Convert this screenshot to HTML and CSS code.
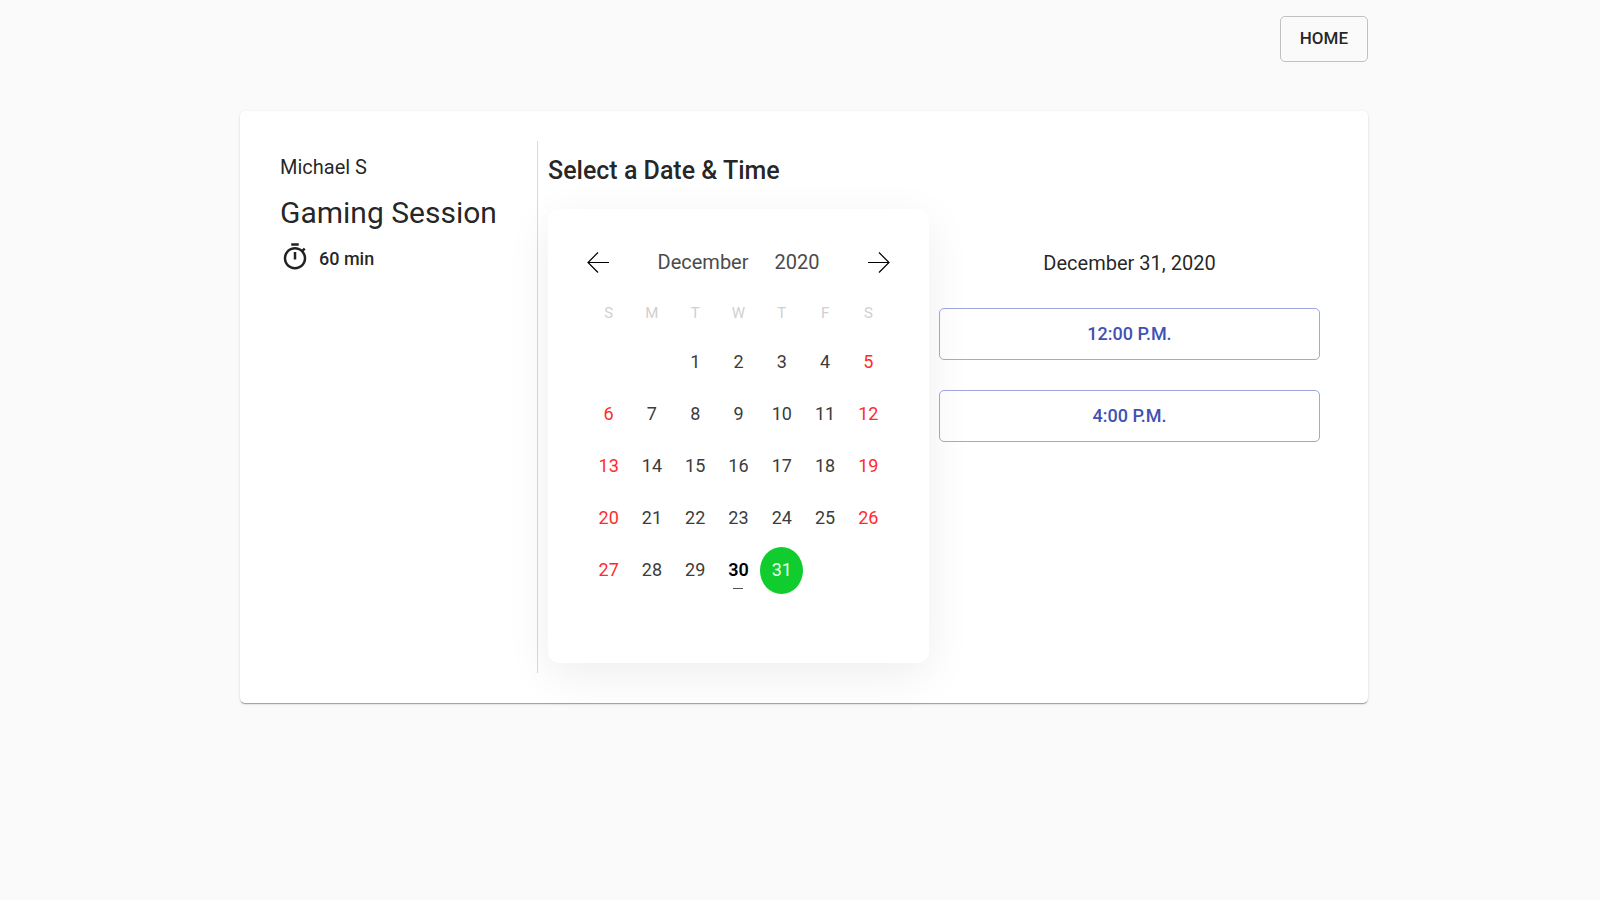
FILE: index.html
```html
<!DOCTYPE html>
<html lang="en">
<head>
<meta charset="utf-8">
<title>Gaming Session</title>
<link rel="stylesheet" href="styles.css">
</head>
<body>
<header class="topbar"><a class="home" href="#">HOME</a></header>
<main class="card">
  <section class="info">
    <p class="host">Michael S</p>
    <h1 class="event">Gaming Session</h1>
    <p class="duration">
      <svg class="timer" viewBox="0 0 24 24" aria-hidden="true"><path d="M15 1H9v2h6V1zm-4 13h2V8h-2v6zm8.030-6.610l1.420-1.420c-.43-.51-.9-.99-1.410-1.410l-1.420 1.420C16.070 4.740 14.120 4 12 4c-4.970 0-9 4.030-9 9s4.020 9 9 9 9-4.030 9-9c0-2.120-.74-4.070-1.970-5.610zM12 20c-3.870 0-7-3.130-7-7s3.130-7 7-7 7 3.130 7 7-3.130 7-7 7z"/></svg>
      <span class="minutes">60 min</span>
    </p>
  </section>
  <section class="picker">
    <h2 class="title">Select a Date &amp; Time</h2>
    <div class="columns">
      <div class="calendar">
        <div class="month-bar">
          <button class="arrow" type="button" aria-label="Previous month"><svg viewBox="0 0 22 22" aria-hidden="true"><path d="M22 11.500H1M11 1.500L1 11.500l10 10"/></svg></button>
          <div class="month-year"><button type="button">December</button><button type="button">2020</button></div>
          <button class="arrow" type="button" aria-label="Next month"><svg viewBox="0 0 22 22" aria-hidden="true"><path d="M0 11.500h21M11 1.500l10 10-10 10"/></svg></button>
        </div>
        <table class="days">
          <thead><tr><th>S</th><th>M</th><th>T</th><th>W</th><th>T</th><th>F</th><th>S</th></tr></thead>
          <tbody>
            <tr><td></td><td></td><td><button>1</button></td><td><button>2</button></td><td><button>3</button></td><td><button>4</button></td><td><button class="weekend">5</button></td></tr>
            <tr><td><button class="weekend">6</button></td><td><button>7</button></td><td><button>8</button></td><td><button>9</button></td><td><button>10</button></td><td><button>11</button></td><td><button class="weekend">12</button></td></tr>
            <tr><td><button class="weekend">13</button></td><td><button>14</button></td><td><button>15</button></td><td><button>16</button></td><td><button>17</button></td><td><button>18</button></td><td><button class="weekend">19</button></td></tr>
            <tr><td><button class="weekend">20</button></td><td><button>21</button></td><td><button>22</button></td><td><button>23</button></td><td><button>24</button></td><td><button>25</button></td><td><button class="weekend">26</button></td></tr>
            <tr><td><button class="weekend">27</button></td><td><button>28</button></td><td><button>29</button></td><td><button class="today">30</button></td><td><button class="selected" aria-pressed="true">31</button></td><td></td><td></td></tr>
          </tbody>
        </table>
      </div>
      <div class="slots">
        <h3 class="date">December 31, 2020</h3>
        <button class="slot" type="button">12:00 P.M.</button>
        <button class="slot" type="button">4:00 P.M.</button>
      </div>
    </div>
  </section>
</main>
</body>
</html>
```
FILE: styles.css
```css
* { box-sizing: border-box; }
body {
  margin: 0;
  padding: 16px 14.5% 40px 15%;
  background: #fafafa;
  color: rgba(0, 0, 0, 0.87);
  font: 400 20px/30px Roboto, sans-serif;
}
h1, h2, h3, p { margin: 0; font-weight: 400; }
button { font: inherit; color: inherit; background: none; border: 0; padding: 0; cursor: pointer; }

.topbar { display: flex; justify-content: flex-end; margin-bottom: 49px; }
.home {
  padding: 6px 19px 8px;
  border: 1px solid rgba(0, 0, 0, 0.23);
  border-radius: 5px;
  color: inherit;
  font-size: 17px;
  font-weight: 500;
  text-decoration: none;
}

.card {
  display: flex;
  padding: 30px 48px 30px 40px;
  background: #fff;
  border-radius: 5px;
  box-shadow: 0 2px 1px -1px rgba(0, 0, 0, 0.2), 0 1px 1px 0 rgba(0, 0, 0, 0.14), 0 1px 3px 0 rgba(0, 0, 0, 0.12);
}
.info { flex: none; width: 258px; padding-top: 11px; border-right: 1px solid rgba(0, 0, 0, 0.15); }
.event { margin-top: 11px; font-size: 30px; line-height: 40px; }
.duration { display: flex; align-items: flex-start; gap: 9px; margin-top: 9px; font-size: 18px; font-weight: 500; }
.timer { width: 30px; height: 30px; fill: currentColor; }
.minutes { padding-top: 2px; }

.picker { flex: 1; padding: 15px 0 10px 10px; }
.title { font-size: 25px; font-weight: 500; }
.columns { display: grid; grid-template-columns: 1fr 1fr; gap: 10px; margin-top: 23px; }

.calendar {
  padding: 25px 39px 67px;
  background: #fff;
  border-radius: 12px;
  box-shadow: 0 12px 46px rgba(0, 0, 0, 0.07);
}
.month-bar { display: flex; align-items: center; justify-content: space-between; height: 56px; }
.month-year { display: flex; gap: 26px; color: #4b4b4b; }
.arrow { display: flex; }
.arrow svg { width: 22px; height: 22px; overflow: visible; fill: none; stroke: #000; stroke-width: 1.2; }

.days { width: 100%; table-layout: fixed; border-collapse: collapse; text-align: center; }
.days th { height: 46px; padding: 0; color: #d0d0d0; font-size: 15px; font-weight: 400; }
.days td { height: 52px; padding: 0; }
.days button { display: block; width: 100%; height: 47px; border-radius: 50%; color: #3c3c3c; font-size: 18px; }
.days .weekend { color: #ff2b2b; }
.days .today { position: relative; color: #000; font-weight: 600; }
.days .today::after {
  content: "";
  position: absolute;
  left: 50%;
  bottom: 5px;
  width: 10px;
  height: 1px;
  margin-left: -5px;
  background: #555;
}
.days .selected { background: #11cc2e; color: #e8ffec; }

.slots { display: flex; flex-direction: column; gap: 30px; padding-top: 39px; text-align: center; }
.slot {
  height: 52px;
  border: 1px solid rgba(63, 81, 181, 0.5);
  border-radius: 5px;
  color: #3f51b5;
  font-size: 18px;
  font-weight: 500;
}
.date { font-size: 20px; }
```
